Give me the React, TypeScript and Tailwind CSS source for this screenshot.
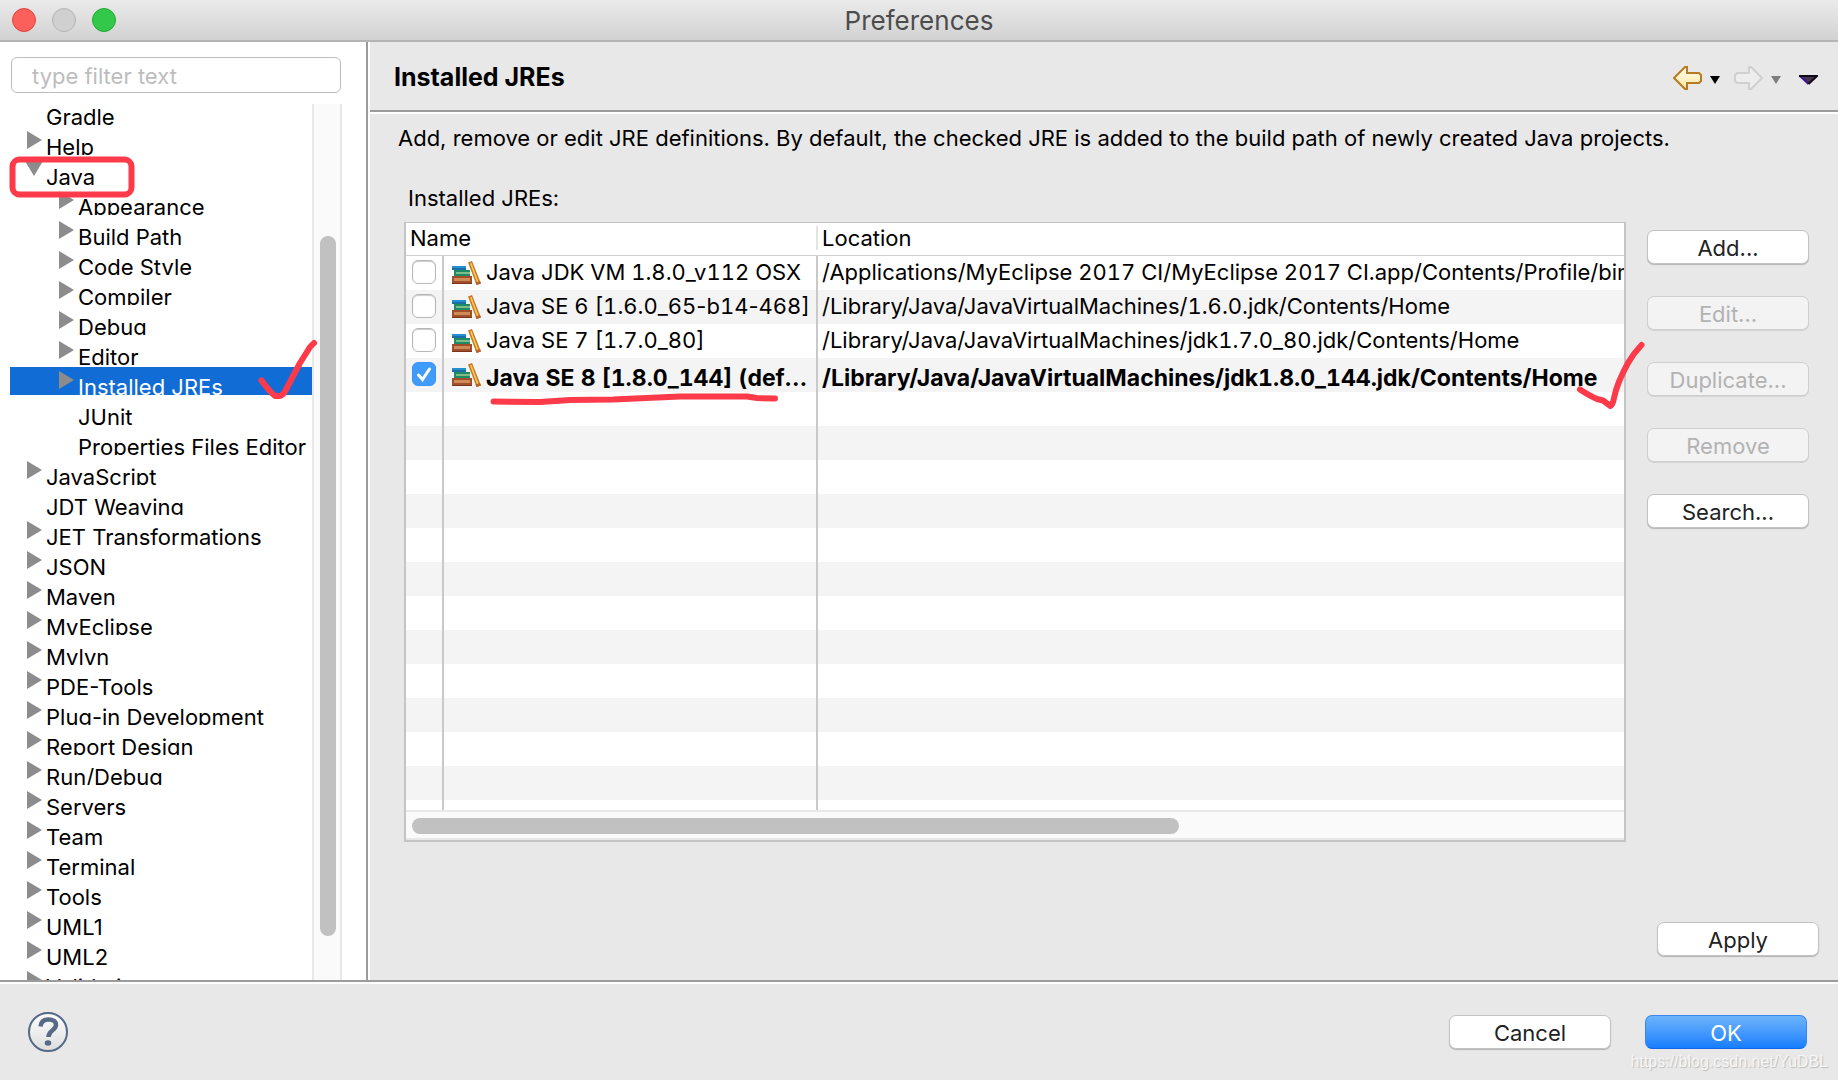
import { useState } from 'react';
import clsx from 'clsx';

type TreeNode = { label: string; level?: number; state?: 'closed' | 'open' };

const treeNodes: TreeNode[] = [
  { label: 'Gradle' },
  { label: 'Help', state: 'closed' },
  { label: 'Java', state: 'open' },
  { label: 'Appearance', level: 1, state: 'closed' },
  { label: 'Build Path', level: 1, state: 'closed' },
  { label: 'Code Style', level: 1, state: 'closed' },
  { label: 'Compiler', level: 1, state: 'closed' },
  { label: 'Debug', level: 1, state: 'closed' },
  { label: 'Editor', level: 1, state: 'closed' },
  { label: 'Installed JREs', level: 1, state: 'closed' },
  { label: 'JUnit', level: 1 },
  { label: 'Properties Files Editor', level: 1 },
  { label: 'JavaScript', state: 'closed' },
  { label: 'JDT Weaving' },
  { label: 'JET Transformations', state: 'closed' },
  { label: 'JSON', state: 'closed' },
  { label: 'Maven', state: 'closed' },
  { label: 'MyEclipse', state: 'closed' },
  { label: 'Mylyn', state: 'closed' },
  { label: 'PDE-Tools', state: 'closed' },
  { label: 'Plug-in Development', state: 'closed' },
  { label: 'Report Design', state: 'closed' },
  { label: 'Run/Debug', state: 'closed' },
  { label: 'Servers', state: 'closed' },
  { label: 'Team', state: 'closed' },
  { label: 'Terminal', state: 'closed' },
  { label: 'Tools', state: 'closed' },
  { label: 'UML1', state: 'closed' },
  { label: 'UML2', state: 'closed' },
  { label: 'Validation', state: 'closed' },
];

const jres = [
  { name: 'Java JDK VM 1.8.0_v112 OSX', location: '/Applications/MyEclipse 2017 CI/MyEclipse 2017 CI.app/Contents/Profile/binary' },
  { name: 'Java SE 6 [1.6.0_65-b14-468]', location: '/Library/Java/JavaVirtualMachines/1.6.0.jdk/Contents/Home' },
  { name: 'Java SE 7 [1.7.0_80]', location: '/Library/Java/JavaVirtualMachines/jdk1.7.0_80.jdk/Contents/Home' },
  { name: 'Java SE 8 [1.8.0_144] (default)', location: '/Library/Java/JavaVirtualMachines/jdk1.8.0_144.jdk/Contents/Home' },
];

const emptyRows = Array.from({ length: 13 }, (_, i) => i);

function BooksIcon() {
  return (
    <svg width="29" height="24" viewBox="0 0 29 24" className="shrink-0">
      <rect x="0" y="5" width="14" height="4" fill="#1b6ea8" />
      <rect x="0" y="5" width="14" height="2" fill="#2590cf" />
      <rect x="2" y="9" width="16" height="7" fill="#1f8a63" />
      <rect x="4" y="11" width="14" height="2" fill="#7dbd88" />
      <rect x="0" y="15" width="20" height="8" fill="#a04e2c" />
      <rect x="2" y="17" width="16" height="3" fill="#d08a55" />
      <rect x="0" y="22" width="20" height="1" fill="#7c3516" />
      <path d="M16 1.5 20 0l9 22.5-4.5 1.5z" fill="#c8772c" />
      <path d="M18 2.5 19.5 2l7.5 20-1.5.5z" fill="#f7cf4e" />
      <path d="M24.5 24l4.5-1.5-1-2.5-4.5 1.5z" fill="#b5622f" />
    </svg>
  );
}

function Arrow({ state }: { state: 'closed' | 'open' }) {
  return state === 'open' ? (
    <svg width="18" height="15" viewBox="0 0 18 15" className="-ml-0.5">
      <path d="M0 0h18L9 15z" fill="#8c8c8c" />
    </svg>
  ) : (
    <svg width="15" height="18" viewBox="0 0 15 18">
      <path d="M0 0v18l15-9z" fill="#8c8c8c" />
    </svg>
  );
}

// tabular figures also widen the hyphen, so hyphens keep their own width
function JreName({ name }: { name: string }) {
  return name.split(/(-)/).map((part, i) =>
    part === '-' ? <span key={i} className="normal-nums">{part}</span> : part,
  );
}

function PushButton({ label, disabled, primary }: { label: string; disabled?: boolean; primary?: boolean }) {
  return (
    <button
      type="button"
      disabled={disabled}
      className={clsx(
        'h-[34px] w-[162px] shrink-0 rounded-[7px] border pt-[2px] text-[22px] leading-none',
        primary && 'border-[#3a86ee] border-b-[#1264e8] bg-linear-to-b from-[#6cb3fa] to-[#147efe] text-white',
        !primary && disabled && 'border-[#cfcfcf] bg-[#f3f3f3] text-[#b2b2b2] shadow-[0_1px_0_#d4d4d4]',
        !primary && !disabled && 'border-[#c3c3c3] bg-white text-[#222] shadow-[0_1px_1px_#b4b4b4]',
      )}
    >
      {label}
    </button>
  );
}

// hand-drawn red marks over the dialog
function Marks() {
  return (
    <svg
      className="pointer-events-none absolute inset-0 h-full w-full"
      fill="none"
      stroke="#fc3a49"
      strokeWidth="6"
      strokeLinecap="round"
      strokeLinejoin="round"
    >
      <rect x="12.5" y="159.5" width="119" height="35" rx="7" />
      <path d="M261.5 380.5 Q270 392 275 396 H280 Q283 395 285 391.5 L300 363 310 347 314 343" />
      <path d="M493.5 401.5 L540 402 570 400 613 399.5 680 396.5 747 396.5 757 398 775 398.5" />
      <path d="M1580 389.5 Q1590 396 1597 399 L1603 400.5 1610.5 406 Q1613 404 1614 398 Q1617 383 1628 363 Q1633 354 1641.5 345" />
    </svg>
  );
}

export default function App() {
  const [checked, setChecked] = useState(3);
  const [selected, setSelected] = useState('Installed JREs');

  return (
    <div className="relative flex h-screen flex-col overflow-hidden bg-[#e8e8e8] font-['Inter','Liberation_Sans',sans-serif] text-[22px] text-black">
      {/* Title bar */}
      <header className="grid h-[42px] shrink-0 grid-cols-[1fr_auto_1fr] items-center border-b-2 border-[#b4b4b4] bg-linear-to-b from-[#ebebeb] to-[#d2d2d2] px-3">
        <div className="flex gap-4">
          <button type="button" aria-label="Close" className="size-6 rounded-full border border-[#e2463f] bg-[#fc605b]" />
          <button type="button" aria-label="Minimize" className="size-6 rounded-full border border-[#b4b4b4] bg-[#d0d0d0]" />
          <button type="button" aria-label="Zoom" className="size-6 rounded-full border border-[#24a936] bg-[#34c84a]" />
        </div>
        <h1 className="pt-0.5 text-[26px] leading-none text-[#4c4c4c]">Preferences</h1>
      </header>

      <div className="flex min-h-0 flex-1">
        {/* Page tree */}
        <aside className="flex w-[370px] shrink-0 flex-col border-r-2 border-white bg-white">
          <div className="flex min-h-0 flex-1 flex-col border-r-2 border-[#9b9b9b] pr-6 pl-[10px]">
            <div className="px-px pt-[15px]">
              <input
                type="text"
                aria-label="type filter text"
                placeholder="type filter text"
                className="block h-9 w-full rounded-md border border-[#bcbcbc] pt-0.5 pl-5 text-[22px] outline-none placeholder:text-[#bdbdbd]"
              />
            </div>
            <div className="mt-1 flex min-h-0 flex-1">
              <ul className="min-w-0 flex-1 overflow-hidden">
                {treeNodes.map(node => (
                  <li key={node.label} className="h-[30px]">
                    <button
                      type="button"
                      onClick={() => setSelected(node.label)}
                      className={clsx(
                        'flex h-7 w-full items-start overflow-hidden text-left whitespace-nowrap',
                        node.level ? 'pl-[49px]' : 'pl-[17px]',
                        selected === node.label && 'bg-[#126cd6] text-white',
                      )}
                    >
                      <span className="flex w-[19px] shrink-0 pt-1">{node.state && <Arrow state={node.state} />}</span>
                      <span className="pt-2 leading-6">{node.label}</span>
                    </button>
                  </li>
                ))}
              </ul>
              <div className="mt-[7px] w-[30px] shrink-0 border-x-2 border-[#e8e8e8] bg-[#fafafa] pt-[132px] pl-[6px]">
                <div className="h-[700px] w-4 rounded-full bg-[#c1c1c1]" />
              </div>
            </div>
          </div>
        </aside>

        <main className="flex min-w-0 flex-1 flex-col">
          <div className="border-b-2 border-white">
            <div className="flex h-[70px] items-center justify-between border-b-2 border-[#9b9b9b] pt-[3px] pr-5 pl-6">
              <h2 className="pb-0.5 text-[25px] leading-8 font-bold">Installed JREs</h2>
              <div className="flex items-center">
                <button type="button" aria-label="Back">
                  <svg width="29" height="24" viewBox="0 0 29 24">
                    <defs>
                      <linearGradient id="back" x1="0" y1="0" x2="0" y2="1">
                        <stop offset="0" stopColor="#fffef0" />
                        <stop offset="1" stopColor="#fde6a0" />
                      </linearGradient>
                    </defs>
                    <path d="M1 12 12 1h2v6h12l2 2v6l-2 2H14v6h-2z" fill="url(#back)" stroke="#b87a22" strokeWidth="2" />
                  </svg>
                </button>
                <button type="button" aria-label="Back history" className="mr-[14px] ml-2">
                  <svg width="10" height="8" viewBox="0 0 10 8" className="mt-1"><path d="M0 0h10L5 8z" fill="#000" /></svg>
                </button>
                <button type="button" aria-label="Forward" disabled>
                  <svg width="29" height="24" viewBox="0 0 29 24">
                    <path d="M28 12 17 1h-2v6H3L1 9v6l2 2h12v6h2z" fill="#ededed" stroke="#d0d0d0" strokeWidth="2" />
                  </svg>
                </button>
                <button type="button" aria-label="Forward history" disabled className="mr-[18px] ml-2">
                  <svg width="10" height="8" viewBox="0 0 10 8" className="mt-1"><path d="M0 0h10L5 8z" fill="#7d7d7d" /></svg>
                </button>
                <button type="button" aria-label="Menu">
                  <svg width="19" height="10" viewBox="0 0 19 10" className="mt-1">
                    <path d="M2 1h15l-7.5 8z" fill="#453349" />
                    <path d="M1 1l8.5 8" stroke="#3a169a" strokeWidth="2" />
                    <path d="M0 1h18l-8.5 8" fill="none" stroke="#100a18" strokeWidth="2" />
                  </svg>
                </button>
              </div>
            </div>
          </div>

          <div className="flex min-h-0 flex-1 flex-col pt-3 pb-6 pl-[34px]">
            <p className="ml-[-6px] leading-6 whitespace-nowrap">
              Add, remove or edit JRE definitions. By default, the checked JRE is added to the build path of newly created Java projects.
            </p>
            <p id="jre-label" className="mt-9 pl-1 leading-6">Installed JREs:</p>

            <div className="mt-3 flex gap-[21px] pr-[29px]">
              <div className="min-w-0 flex-1 border-2 border-t border-[#c4c4c4] bg-white">
                <div className="h-[587px] overflow-hidden">
                  <table aria-labelledby="jre-label" className="w-full table-fixed border-separate border-spacing-0 whitespace-nowrap tabular-nums">
                    <colgroup>
                      <col className="w-[38px]" />
                      <col className="w-[374px]" />
                      <col />
                    </colgroup>
                    <thead>
                      <tr className="text-left">
                        <th colSpan={2} className="h-[33px] border-b border-[#d0d0d0] p-0 pb-0.5 font-normal">
                          <div className="border-r-2 border-[#e4e4e4] pl-1 leading-6">Name</div>
                        </th>
                        <th className="border-b border-[#d0d0d0] p-0 pb-0.5 pl-1 leading-6 font-normal">Location</th>
                      </tr>
                    </thead>
                    <tbody>
                      {jres.map((jre, i) => (
                        <tr key={jre.name} className={clsx('h-[34px] even:bg-[#f4f4f4]', i === 3 && 'text-[23px] font-bold')}>
                          <td className="border-r-2 border-[#c9c9c9] p-0">
                            <div className="flex h-[34px] items-start pt-1 pl-[6px]">
                              <span className="relative flex size-6">
                                <input
                                  type="checkbox"
                                  aria-label={jre.name}
                                  checked={checked === i}
                                  onChange={() => setChecked(i)}
                                  className="size-6 appearance-none rounded-md border border-[#b6b6b6] bg-white shadow-[inset_0_1px_1px_#ccc] checked:border-[#3b93f7] checked:bg-[#419bf9] checked:shadow-none"
                                />
                                {checked === i && (
                                  <svg viewBox="0 0 24 24" className="pointer-events-none absolute inset-0" fill="none" stroke="#fff" strokeWidth="3" strokeLinecap="round">
                                    <path d="M6.5 13 10.5 17.5 17.5 7" />
                                  </svg>
                                )}
                              </span>
                            </div>
                          </td>
                          <td className="border-r-2 border-[#c9c9c9] p-0">
                            <div className="flex h-[34px] items-center gap-[5px] pl-2">
                              <BooksIcon />
                              <span className={clsx('truncate leading-[26px]', i === 3 ? 'pt-1.5' : 'pb-0.5')}>
                                <JreName name={jre.name} />
                              </span>
                            </div>
                          </td>
                          <td className="p-0">
                            <div className={clsx('overflow-hidden pl-1 leading-[26px]', i === 3 ? 'pt-1.5' : 'pb-0.5')}>{jre.location}</div>
                          </td>
                        </tr>
                      ))}
                      {emptyRows.map(i => (
                        <tr key={i} className="h-[34px] even:bg-[#f4f4f4]">
                          <td className="border-r-2 border-[#c9c9c9] p-0" />
                          <td className="border-r-2 border-[#c9c9c9] p-0" />
                          <td className="p-0" />
                        </tr>
                      ))}
                    </tbody>
                  </table>
                </div>
                <div className="h-[30px] border-y-2 border-[#e8e8e8] bg-[#fafafa] px-[6px] pt-[6px]">
                  <div className="h-4 w-7/11 rounded-full bg-[#c1c1c1]" />
                </div>
              </div>

              <div className="flex flex-col gap-8 pt-2">
                <PushButton label="Add..." />
                <PushButton label="Edit..." disabled />
                <PushButton label="Duplicate..." disabled />
                <PushButton label="Remove" disabled />
                <PushButton label="Search..." />
              </div>
            </div>

            <div className="mt-auto flex justify-end pr-[19px]">
              <PushButton label="Apply" />
            </div>
          </div>
        </main>
      </div>

      {/* Footer */}
      <footer className="shrink-0 border-t-2 border-[#9b9b9b]">
        <div className="flex h-[98px] items-center gap-[34px] border-t-2 border-white pr-[31px] pl-7">
          <button type="button" aria-label="Help" className="mr-auto">
            <svg width="40" height="40" viewBox="0 0 40 40">
              <defs>
                <linearGradient id="help" x1="0" y1="0" x2="0" y2="1">
                  <stop offset="0" stopColor="#fdfdfd" />
                  <stop offset="1" stopColor="#dedede" />
                </linearGradient>
              </defs>
              <circle cx="20" cy="20" r="19" fill="url(#help)" stroke="#566986" strokeWidth="2" />
              <path d="M12.5 14.5C13 9.5 16 7.5 20.5 7.5c4.5 0 7.5 2 7.5 5.5 0 5-7.5 5.5-7.5 12" fill="none" stroke="#566986" strokeWidth="4.5" />
              <ellipse cx="20" cy="31" rx="3.3" ry="2.7" fill="#566986" />
            </svg>
          </button>
          <PushButton label="Cancel" />
          <PushButton label="OK" primary />
        </div>
      </footer>

      <p className="absolute right-[10px] bottom-1.5 font-['Liberation_Sans',sans-serif] text-base text-[#f6f6f6] [text-shadow:1px_1px_1px_#bbb]">
        https://blog.csdn.net/YuDBL
      </p>
      <Marks />
    </div>
  );
}
